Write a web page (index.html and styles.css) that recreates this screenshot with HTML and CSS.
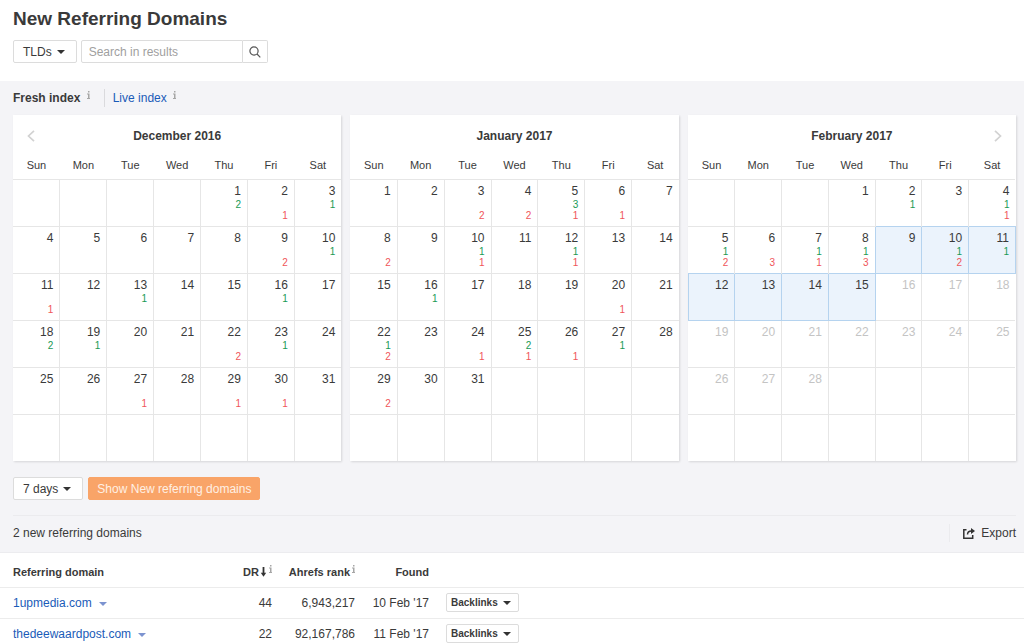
FILE: index.html
```
<!DOCTYPE html>
<html lang="en">
<head>
<meta charset="utf-8">
<meta name="viewport" content="width=device-width, initial-scale=1">
<title>New Referring Domains</title>
<link rel="stylesheet" href="styles.css">
</head>
<body>
<header class="page-head">
  <h1>New Referring Domains</h1>
  <form class="filters">
    <button type="button" class="btn">TLDs <span class="caret"></span></button>
    <div class="search">
      <input type="text" class="search-input" placeholder="Search in results" aria-label="Search in results">
      <button type="button" class="search-btn" aria-label="Search"><svg width="12" height="12" viewBox="0 0 12 12" fill="none" stroke="#555" stroke-width="1.2"><circle cx="5" cy="5" r="4.1"/><path d="M8 8l3.3 3.3"/></svg></button>
    </div>
  </form>
</header>

<main>
<section class="panel">
  <nav class="tabs">
    <span class="tab tab-current">Fresh index <svg class="info" width="3" height="8" viewBox="0 0 3 8" fill="#a6a6a6"><path d="M1 0h1.500v1.500H1zM0 2.500h2.500V7H3v1H0V7h1V3.500H0z"/></svg></span>
    <span class="tab"><a href="#live">Live index</a> <svg class="info" width="3" height="8" viewBox="0 0 3 8" fill="#a6a6a6"><path d="M1 0h1.500v1.500H1zM0 2.500h2.500V7H3v1H0V7h1V3.500H0z"/></svg></span>
  </nav>

  <div class="months">
    <section class="month">
      <div class="month-head">
        <button type="button" class="arrow" aria-label="Previous month"><svg width="8" height="12" viewBox="0 0 8 12" fill="none" stroke="#d2d2d2" stroke-width="1.700"><path d="M7 .8L1.500 6 7 11.200"/></svg></button>
        <h2>December 2016</h2>
        <span class="arrow"></span>
      </div>
      <table class="days">
        <thead><tr><th>Sun</th><th>Mon</th><th>Tue</th><th>Wed</th><th>Thu</th><th>Fri</th><th>Sat</th></tr></thead>
        <tbody>
          <tr><td></td><td></td><td></td><td></td><td><b>1</b><span class="new">2</span></td><td><b>2</b><span class="lost">1</span></td><td><b>3</b><span class="new">1</span></td></tr>
          <tr><td><b>4</b></td><td><b>5</b></td><td><b>6</b></td><td><b>7</b></td><td><b>8</b></td><td><b>9</b><span class="lost">2</span></td><td><b>10</b><span class="new">1</span></td></tr>
          <tr><td><b>11</b><span class="lost">1</span></td><td><b>12</b></td><td><b>13</b><span class="new">1</span></td><td><b>14</b></td><td><b>15</b></td><td><b>16</b><span class="new">1</span></td><td><b>17</b></td></tr>
          <tr><td><b>18</b><span class="new">2</span></td><td><b>19</b><span class="new">1</span></td><td><b>20</b></td><td><b>21</b></td><td><b>22</b><span class="lost">2</span></td><td><b>23</b><span class="new">1</span></td><td><b>24</b></td></tr>
          <tr><td><b>25</b></td><td><b>26</b></td><td><b>27</b><span class="lost">1</span></td><td><b>28</b></td><td><b>29</b><span class="lost">1</span></td><td><b>30</b><span class="lost">1</span></td><td><b>31</b></td></tr>
          <tr><td></td><td></td><td></td><td></td><td></td><td></td><td></td></tr>
        </tbody>
      </table>
    </section>

    <section class="month">
      <div class="month-head">
        <span class="arrow"></span>
        <h2>January 2017</h2>
        <span class="arrow"></span>
      </div>
      <table class="days">
        <thead><tr><th>Sun</th><th>Mon</th><th>Tue</th><th>Wed</th><th>Thu</th><th>Fri</th><th>Sat</th></tr></thead>
        <tbody>
          <tr><td><b>1</b></td><td><b>2</b></td><td><b>3</b><span class="lost">2</span></td><td><b>4</b><span class="lost">2</span></td><td><b>5</b><span class="new">3</span><span class="lost">1</span></td><td><b>6</b><span class="lost">1</span></td><td><b>7</b></td></tr>
          <tr><td><b>8</b><span class="lost">2</span></td><td><b>9</b></td><td><b>10</b><span class="new">1</span><span class="lost">1</span></td><td><b>11</b></td><td><b>12</b><span class="new">1</span><span class="lost">1</span></td><td><b>13</b></td><td><b>14</b></td></tr>
          <tr><td><b>15</b></td><td><b>16</b><span class="new">1</span></td><td><b>17</b></td><td><b>18</b></td><td><b>19</b></td><td><b>20</b><span class="lost">1</span></td><td><b>21</b></td></tr>
          <tr><td><b>22</b><span class="new">1</span><span class="lost">2</span></td><td><b>23</b></td><td><b>24</b><span class="lost">1</span></td><td><b>25</b><span class="new">2</span><span class="lost">1</span></td><td><b>26</b><span class="lost">1</span></td><td><b>27</b><span class="new">1</span></td><td><b>28</b></td></tr>
          <tr><td><b>29</b><span class="lost">2</span></td><td><b>30</b></td><td><b>31</b></td><td></td><td></td><td></td><td></td></tr>
          <tr><td></td><td></td><td></td><td></td><td></td><td></td><td></td></tr>
        </tbody>
      </table>
    </section>

    <section class="month">
      <div class="month-head">
        <span class="arrow"></span>
        <h2>February 2017</h2>
        <button type="button" class="arrow" aria-label="Next month"><svg width="8" height="12" viewBox="0 0 8 12" fill="none" stroke="#d2d2d2" stroke-width="1.700"><path d="M1 .8L6.500 6 1 11.200"/></svg></button>
      </div>
      <table class="days">
        <thead><tr><th>Sun</th><th>Mon</th><th>Tue</th><th>Wed</th><th>Thu</th><th>Fri</th><th>Sat</th></tr></thead>
        <tbody>
          <tr><td></td><td></td><td></td><td><b>1</b></td><td><b>2</b><span class="new">1</span></td><td><b>3</b></td><td><b>4</b><span class="new">1</span><span class="lost">1</span></td></tr>
          <tr><td><b>5</b><span class="new">1</span><span class="lost">2</span></td><td><b>6</b><span class="lost">3</span></td><td><b>7</b><span class="new">1</span><span class="lost">1</span></td><td><b>8</b><span class="new">1</span><span class="lost">3</span></td><td class="picked"><b>9</b></td><td class="picked"><b>10</b><span class="new">1</span><span class="lost">2</span></td><td class="picked"><b>11</b><span class="new">1</span></td></tr>
          <tr><td class="picked"><b>12</b></td><td class="picked"><b>13</b></td><td class="picked"><b>14</b></td><td class="picked"><b>15</b></td><td class="future"><b>16</b></td><td class="future"><b>17</b></td><td class="future"><b>18</b></td></tr>
          <tr class="future"><td><b>19</b></td><td><b>20</b></td><td><b>21</b></td><td><b>22</b></td><td><b>23</b></td><td><b>24</b></td><td><b>25</b></td></tr>
          <tr class="future"><td><b>26</b></td><td><b>27</b></td><td><b>28</b></td><td></td><td></td><td></td><td></td></tr>
          <tr><td></td><td></td><td></td><td></td><td></td><td></td><td></td></tr>
        </tbody>
      </table>
    </section>
  </div>

  <div class="actions">
    <button type="button" class="btn">7 days <span class="caret"></span></button>
    <button type="button" class="btn btn-primary">Show New referring domains</button>
  </div>

  <div class="summary">
    <span>2 new referring domains</span>
    <button type="button" class="export"><svg width="12" height="11" viewBox="0 0 12 11" fill="none" stroke="#333" stroke-width="1.500"><path d="M3.500 1.800H.8v8.400h8.900V7"/><path d="M4.500 6.500C4.500 4 5.500 3 8.500 3"/><path d="M8 0l4 3-4 3z" fill="#333" stroke="none"/></svg> Export</button>
  </div>
</section>

<table class="domains">
  <thead>
    <tr>
      <th class="col-domain">Referring domain</th>
      <th class="col-dr">DR<svg class="sort" width="7" height="10" viewBox="0 0 7 10" fill="none" stroke="#333" stroke-width="1.800"><path d="M3.500 0v7"/><path d="M.8 5.800h5.400L3.500 9.800z" fill="#333" stroke="none"/></svg><svg class="info" width="3" height="8" viewBox="0 0 3 8" fill="#a6a6a6"><path d="M1 0h1.500v1.500H1zM0 2.500h2.500V7H3v1H0V7h1V3.500H0z"/></svg></th>
      <th class="col-rank">Ahrefs rank<svg class="info" width="3" height="8" viewBox="0 0 3 8" fill="#a6a6a6"><path d="M1 0h1.500v1.500H1zM0 2.500h2.500V7H3v1H0V7h1V3.500H0z"/></svg></th>
      <th class="col-found">Found</th>
      <td class="col-links"></td>
    </tr>
  </thead>
  <tbody>
    <tr>
      <td class="col-domain"><a href="#1upmedia">1upmedia.com</a> <span class="caret caret-link"></span></td>
      <td>44</td><td>6,943,217</td><td>10 Feb '17</td>
      <td class="col-links"><button type="button" class="btn btn-small">Backlinks <span class="caret"></span></button></td>
    </tr>
    <tr>
      <td class="col-domain"><a href="#thedeewaardpost">thedeewaardpost.com</a> <span class="caret caret-link"></span></td>
      <td>22</td><td>92,167,786</td><td>11 Feb '17</td>
      <td class="col-links"><button type="button" class="btn btn-small">Backlinks <span class="caret"></span></button></td>
    </tr>
  </tbody>
</table>
</main>
</body>
</html>
```
FILE: styles.css
```
* { box-sizing: border-box; }

body {
  margin: 0;
  background: #fff;
  color: #3a3a3a;
  font: 12px/16px "Liberation Sans", Arial, sans-serif;
}

h1, h2 { margin: 0; }
a { color: #1a5bb8; text-decoration: none; }

button, input {
  font: inherit;
  color: inherit;
}
button {
  padding: 0;
  border: 0;
  background: none;
  cursor: pointer;
}

.page-head { padding: 8px 8px 18px 13px; }
.page-head h1 {
  font-size: 19px;
  line-height: 22px;
}
.filters {
  display: flex;
  gap: 4px;
  margin-top: 10px;
}

.btn {
  display: inline-flex;
  align-items: center;
  gap: 5px;
  height: 23px;
  padding: 0 11px 0 9px;
  border: 1px solid #dcdcdc;
  border-radius: 2px;
  background: #fff;
  font-size: 12px;
  white-space: nowrap;
}
.btn-primary {
  padding: 0 8px;
  border-color: #f9a468;
  background: #f9a468;
  color: #fff0e4;
}
.btn-small {
  height: 19px;
  padding: 0 7px 0 4px;
  font-size: 10px;
  font-weight: bold;
}
.caret {
  display: inline-block;
  border: 4px solid transparent;
  border-top-color: #333;
  border-bottom: 0;
}
.caret-link {
  margin-left: 4px;
  border-top-color: #7c93d0;
  vertical-align: 1px;
}

.search { display: flex; }
.search-input {
  width: 162px;
  height: 23px;
  padding: 0 7px;
  border: 1px solid #dcdcdc;
  border-radius: 2px 0 0 2px;
  background: #fff;
}
.search-input::placeholder { color: #a0a0a0; opacity: 1; }
.search-btn {
  display: flex;
  align-items: center;
  justify-content: center;
  width: 25px;
  border: 1px solid #dcdcdc;
  border-left: 0;
  border-radius: 0 2px 2px 0;
}

.panel {
  padding: 8px 8px 0 13px;
  border-bottom: 1px solid #ececef;
  background: #f4f4f7;
}
.tabs { display: flex; }
.tab { line-height: 18px; }
.tab + .tab {
  margin-left: 14px;
  padding-left: 8px;
  border-left: 1px solid #dadadd;
}
.tab-current { font-weight: bold; }
.info {
  margin-left: 3px;
  vertical-align: 3px;
}

.months {
  display: flex;
  gap: 9px;
  margin-top: 8px;
}
.month {
  flex: 1;
  background: #fff;
  box-shadow: 1px 1px 2px rgba(0, 0, 0, .12);
}
.month-head {
  display: flex;
  align-items: center;
  justify-content: space-between;
  padding-top: 6px;
}
.month-head h2 {
  font-size: 12px;
  line-height: 30px;
}
.arrow {
  display: flex;
  align-items: center;
  justify-content: center;
  width: 35px;
  height: 30px;
}

.days {
  width: 100%;
  border-collapse: collapse;
  table-layout: fixed;
}
.days th {
  height: 28px;
  padding: 0;
  font-size: 11px;
  font-weight: normal;
}
.days td {
  height: 47px;
  padding: 4px 6px 0 0;
  border-top: 1px solid #e6e6e6;
  border-left: 1px solid #e6e6e6;
  text-align: right;
  vertical-align: top;
}
.days td:first-child { border-left: 0; }
.days b {
  display: block;
  font-weight: normal;
  line-height: 15px;
}
.days span {
  display: block;
  font-size: 10px;
  line-height: 11px;
}
.days b + .lost { margin-top: 11px; }
.new { color: #1a9a55; }
.lost { color: #f0555a; }
.days .picked,
.days .picked:first-child {
  border: 1px solid #b5d3ef;
  background: #ebf3fc;
}
.future { color: #c4c4c4; }

.actions {
  display: flex;
  gap: 5px;
  padding: 16px 0 15px;
}
.summary {
  display: flex;
  align-items: center;
  justify-content: space-between;
  padding: 8px 0 10px;
  border-top: 1px solid #ebebee;
}
.export {
  display: flex;
  align-items: center;
  gap: 6px;
  padding-left: 13px;
  border-left: 1px solid #ebebee;
  line-height: 18px;
}

.domains {
  width: 100%;
  border-collapse: collapse;
  table-layout: fixed;
}
.domains th, .domains td {
  height: 31px;
  padding: 0;
  border-bottom: 1px solid #ececec;
  text-align: right;
}
.domains th, .domains thead td {
  height: 34px;
  padding-top: 5px;
  font-size: 11px;
}
.domains th.col-domain, .domains .col-domain {
  width: 230px;
  padding-left: 13px;
  text-align: left;
}
.col-dr { width: 42px; }
.col-rank { width: 83px; }
.col-found { width: 74px; }
.domains .col-links {
  padding-left: 17px;
  text-align: left;
}
.domains .info { margin-left: 2px; }
.sort {
  margin-left: 1px;
  vertical-align: -1px;
}
.domains .btn { vertical-align: middle; }
```
